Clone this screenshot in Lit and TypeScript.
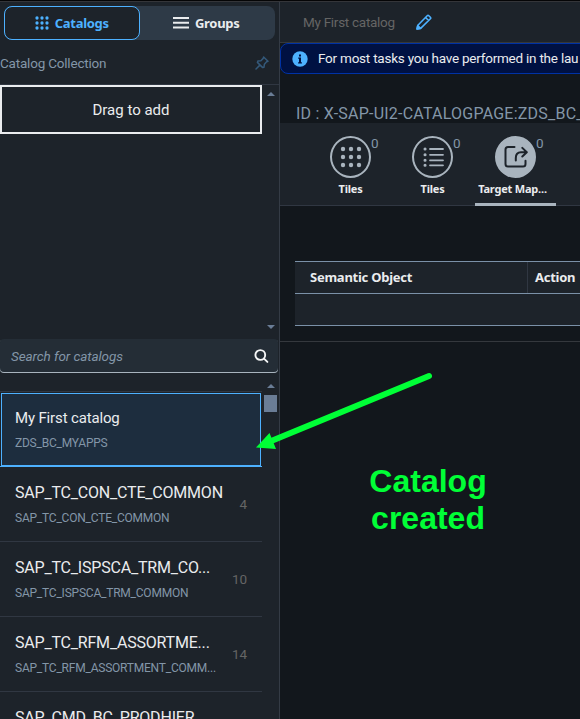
import { LitElement, html, css, svg } from "lit";
import { customElement } from "lit/decorators.js";
import { classMap } from "lit/directives/class-map.js";

interface Catalog {
  title: string;
  id: string;
  count?: number;
  selected?: boolean;
}

const catalogs: Catalog[] = [
  { title: "My First catalog", id: "ZDS_BC_MYAPPS", selected: true },
  { title: "SAP_TC_CON_CTE_COMMON", id: "SAP_TC_CON_CTE_COMMON", count: 4 },
  { title: "SAP_TC_ISPSCA_TRM_CO...", id: "SAP_TC_ISPSCA_TRM_COMMON", count: 10 },
  { title: "SAP_TC_RFM_ASSORTME...", id: "SAP_TC_RFM_ASSORTMENT_COMM...", count: 14 },
  { title: "SAP_CMD_BC_PRODHIER", id: "" },
];

const dots = (start: number, step: number, r: number) =>
  [0, 1, 2].map((y) => [0, 1, 2].map((x) => svg`<circle cx=${start + x * step} cy=${start + y * step} r=${r}></circle>`));

const gridSmall = html`<svg width="14" height="14" viewBox="0 0 14 14" fill="currentColor">${dots(2, 5, 1.65)}</svg>`;
const gridLarge = html`<svg width="22" height="22" viewBox="0 0 22 22" fill="currentColor">${dots(3, 8, 2.2)}</svg>`;
const menu = html`<svg width="16" height="12" viewBox="0 0 16 12" fill="currentColor"><path d="M0 0h16v2H0zM0 4.7h16v2H0zM0 9.4h16v2H0z"></path></svg>`;
const pin = html`<svg width="14" height="14" viewBox="0 0 14 14" fill="none" stroke="currentColor" stroke-width="1.5" stroke-linejoin="round" stroke-linecap="round"><path d="M8.6 1 L13 5.3 L11.6 5.8 L9.4 8.2 L9 11.2 L7.7 11.6 L2.4 6.4 L2.9 5.1 L5.9 4.7 L8.2 2.4 Z M4.9 9.1 L1 13"></path></svg>`;
const pencil = html`<svg width="16" height="16" viewBox="0 0 16 16" fill="none" stroke="currentColor" stroke-width="1.6" stroke-linejoin="round"><path d="M1.1 14.9 L1.9 11.2 L11.2 1.7 Q12 .9 12.8 1.7 L14.4 3.3 Q15.1 4 14.4 4.8 L4.9 14.1 Z M9.6 3.5 L12.6 6.5"></path><path d="M1 15l.7-3.4 2.8 2.8z" fill="currentColor"></path></svg>`;
const info = html`<svg width="16" height="16" viewBox="0 0 16 16"><circle cx="8" cy="8" r="7.7" fill="#4db1ff"></circle><path d="M7 3.4h2v2H7zM6.2 6.6H9v4.6h.9v1.2H6.1v-1.2H7V7.8h-.8z" fill="#001142"></path></svg>`;
const search = html`<svg width="15" height="15" viewBox="0 0 15 15" fill="none" stroke="currentColor" stroke-width="1.9" stroke-linecap="round"><circle cx="6.3" cy="6" r="4.9"></circle><path d="M10 9.6l3.4 3.3"></path></svg>`;
const list = html`<svg width="22" height="22" viewBox="0 0 22 22" fill="none" stroke="currentColor" stroke-linecap="round"><path stroke-width="1.8" d="M8 3h13M8 8.8h13M8 14.3h13M8 19.3h13"></path><path stroke-width="3" d="M3 3h.1M3 8.8h.1M3 14.3h.1M3 19.3h.1"></path></svg>`;
const share = html`<svg width="24" height="24" viewBox="0 0 24 24" fill="none" stroke="#1d232a" stroke-width="2" stroke-linecap="round" stroke-linejoin="round"><path d="M10.5 2H4Q1.5 2 1.5 4.5V19Q1.5 21.5 4 21.5H19Q21.5 21.5 21.5 19V15.8"></path><path d="M11.8 15.5V13Q11.8 7.2 17 7.2H22.3M18.3 2.9L22.8 7.2L18.3 11.5"></path></svg>`;

@customElement("catalog-row")
class CatalogRow extends LitElement {
  static properties = { item: { attribute: false } };
  declare item: Catalog;

  static styles = css`
    :host { display: block; height: 75px; flex: none; }
    .row { box-sizing: border-box; height: 75px; border-bottom: 1px solid #303742; padding: 0 15px; display: flex; align-items: center; }
    .names { flex: 1; min-width: 0; white-space: nowrap; }
    .title { font-size: 15px; letter-spacing: -0.15px; line-height: 22px; color: #eaecee; }
    .sub { font-size: 12px; line-height: 18px; height: 18px; margin-top: 5px; color: #8396a8; letter-spacing: -0.22px; }
    .caps { font-size: 16px; letter-spacing: -0.2px; }
    .count { font-size: 13.5px; letter-spacing: -0.1px; color: #656565; margin-top: -1px; }
    .selected { border-bottom-color: #4db1ff; padding: 1px 0 0 1px; }
    .selected .names { box-sizing: border-box; height: 73px; margin-right: 1px; border: 1px solid #4db1ff; background: #1d2d3e; padding: 13px; }
  `;

  render() {
    const { title, id, count, selected } = this.item;
    return html`<div class=${classMap({ row: true, selected: !!selected })}>
      <div class="names">
        <div class=${classMap({ title: true, caps: !selected })}>${title}</div>
        <div class="sub">${id}</div>
      </div>
      ${count === undefined ? "" : html`<span class="count">${count}</span>`}
    </div>`;
  }
}

@customElement("app-root")
class AppRoot extends LitElement {
  static styles = css`
    :host { display: block; position: relative; box-sizing: border-box; width: 580px; height: 719px; overflow: hidden; background: #12171c; color: #eaecee; font-family: Roboto, "Noto Sans", sans-serif; font-size: 13.5px; border-top: 1px solid #050506; }
    svg { display: block; flex: none; }
    .page { display: grid; grid-template-columns: 280px minmax(0, 1fr); height: 718px; box-sizing: border-box; border-top: 1px solid #343539; }
    .side { background: #1d232a; border-right: 1px solid #343b45; display: flex; flex-direction: column; overflow: hidden; min-height: 0; }
    .segments { flex: none; height: 34px; margin: 4px 4px 0; display: flex; border-radius: 8px; background: #2e3a47; font: 700 13px "Noto Sans", sans-serif; letter-spacing: -0.3px; }
    .segment { flex: 1; box-sizing: border-box; display: flex; justify-content: center; align-items: center; gap: 6px; padding-right: 2px; }
    .active { border: 1px solid #4db1ff; border-radius: 8px; background: #1d232a; color: #4db1ff; padding-right: 0; }
    .heading { flex: none; height: 44px; box-sizing: content-box; border-bottom: 1px solid #303742; display: flex; justify-content: space-between; align-items: center; color: #8396a8; padding-right: 10px; letter-spacing: -0.2px; }
    .heading span { padding-top: 2px; }
    .heading svg { color: #34597a; margin-top: 2px; }
    .groups { height: 254px; flex: none; display: flex; }
    .drop { box-sizing: border-box; width: 262px; flex: none; height: 49px; border: 2px solid #eaecee; display: flex; align-items: center; justify-content: center; font-size: 15px; }
    .rail { width: 17px; flex: none; display: flex; flex-direction: column; align-items: center; justify-content: space-between; }
    .up, .down { width: 0; height: 0; border: 4px solid transparent; }
    .up { border-top: 0; border-bottom-color: #6a7d96; }
    .down { border-bottom: 0; border-top-color: #6a7d96; }
    .groups .rail { box-sizing: border-box; padding: 7px 0 10px; }
    .search { flex: none; box-sizing: border-box; width: 278px; height: 34px; border-radius: 4px; background: #242d36; display: flex; align-items: center; justify-content: space-between; padding: 0 9px 0 11px; color: #8396a8; box-shadow: inset 0 -1px 0 #a9b4be; font-style: italic; letter-spacing: -0.08px; }
    .search svg { color: #f5f6f7; }
    .search span { margin-top: -1px; }
    .catalogs { flex: 1; min-height: 0; display: flex; margin-top: 11px; overflow: hidden; }
    .rows { width: 262px; flex: none; box-sizing: border-box; display: flex; flex-direction: column; padding-top: 7px; }
    .rule { height: 1px; flex: none; background: #303742; }
    .catalogs .rail { justify-content: flex-start; }
    .thumb { width: 13px; height: 17px; background: #6a7d96; margin-top: 7px; }
    .main { min-width: 0; overflow: hidden; white-space: nowrap; display: flex; flex-direction: column; }
    .titlebar { flex: none; box-sizing: border-box; height: 41px; background: #1d232a; border-bottom: 1px solid #34373b; display: flex; align-items: center; gap: 21px; padding-left: 23px; color: #656565; letter-spacing: -0.28px; }
    .titlebar span { width: 92px; margin-top: -1px; }
    .titlebar svg { color: #4db1ff; }
    .message { flex: none; box-sizing: border-box; width: 600px; height: 31px; border: 1px solid #0032a5; border-radius: 8px; background: #001142; display: flex; align-items: center; gap: 10px; padding-left: 11px; letter-spacing: -0.23px; }
    .message span { margin-top: -1px; }
    .ident { flex: none; height: 49px; box-sizing: border-box; padding: 30px 0 0 16px; font-size: 16px; line-height: 20px; color: #8396a8; letter-spacing: 0.22px; }
    .tabs { flex: none; box-sizing: border-box; height: 83px; background: #1d232a; border-bottom: 1px solid #303742; display: flex; padding-left: 30px; }
    .tab { width: 81px; margin-right: 1px; display: flex; flex-direction: column; align-items: center; position: relative; padding-top: 13px; box-sizing: border-box; margin-bottom: -1px; }
    .ring { box-sizing: border-box; width: 41px; height: 42px; border: 2px solid #a9b4be; border-radius: 50%; color: #a9b4be; display: flex; align-items: center; justify-content: center; }
    .fill { background: #a9b4be; }
    .name { font: 700 11px/16px "Noto Sans", sans-serif; letter-spacing: -0.2px; margin-top: 3px; }
    .badge { position: absolute; left: 61px; top: 12px; line-height: 16px; color: #8396a8; }
    .current { margin-left: 1px; box-shadow: inset 0 -3px 0 #a9b4be; }
    .current .name { margin-right: 6px; }
    .table { flex: none; width: 500px; margin: 55px 0 0 15px; border-top: 1px solid #7b91a8; background: #1d232a; }
    .cells { box-sizing: border-box; height: 32px; display: flex; border-bottom: 1px solid #7b91a8; font: 700 13px "Noto Sans", sans-serif; letter-spacing: -0.25px; }
    .cell { box-sizing: border-box; width: 233px; padding: 0 0 1px 15px; display: flex; align-items: center; border-right: 1px solid #303742; }
    .narrow { padding-left: 7px; border: 0; }
    .end { margin-top: 15px; height: 1px; flex: none; background: #34383d; }
    .note { position: absolute; left: 358px; top: 462px; width: 140px; text-align: center; font: 700 32px/37px "Liberation Sans", sans-serif; color: #00ff36; }
    .arrow { position: absolute; left: 250px; top: 364px; }
  `;

  render() {
    return html`
      <div class="page">
        <div class="side">
          <div class="segments">
            <div class="segment active">${gridSmall}<span>Catalogs</span></div>
            <div class="segment">${menu}<span>Groups</span></div>
          </div>
          <div class="heading"><span>Catalog Collection</span>${pin}</div>
          <div class="groups">
            <div class="drop">Drag to add</div>
            <div class="rail"><div class="up"></div><div class="down"></div></div>
          </div>
          <div class="search"><span>Search for catalogs</span>${search}</div>
          <div class="catalogs">
            <div class="rows">
              <div class="rule"></div>
              ${catalogs.map((item) => html`<catalog-row .item=${item}></catalog-row>`)}
            </div>
            <div class="rail"><div class="up"></div><div class="thumb"></div></div>
          </div>
        </div>
        <div class="main">
          <div class="titlebar"><span>My First catalog</span>${pencil}</div>
          <div class="message">${info}<span>For most tasks you have performed in the lau</span></div>
          <div class="ident">ID : X-SAP-UI2-CATALOGPAGE:ZDS_BC_</div>
          <div class="tabs">
            <div class="tab"><div class="ring">${gridLarge}</div><span class="name">Tiles</span><span class="badge">0</span></div>
            <div class="tab"><div class="ring">${list}</div><span class="name">Tiles</span><span class="badge">0</span></div>
            <div class="tab current"><div class="ring fill">${share}</div><span class="name">Target Map...</span><span class="badge">0</span></div>
          </div>
          <div class="table">
            <div class="cells"><div class="cell">Semantic Object</div><div class="cell narrow">Action</div></div>
            <div class="cells"></div>
          </div>
          <div class="end"></div>
        </div>
      </div>
      <svg class="arrow" width="190" height="95" viewBox="250 365 190 95">
        <path d="M429 376L270 441.5" stroke="#00ff36" stroke-width="6" stroke-linecap="round"></path>
        <path d="M256 447.5L269.5 433L276 449Z" fill="#00ff36"></path>
      </svg>
      <div class="note">Catalog<br />created</div>
    `;
  }
}
